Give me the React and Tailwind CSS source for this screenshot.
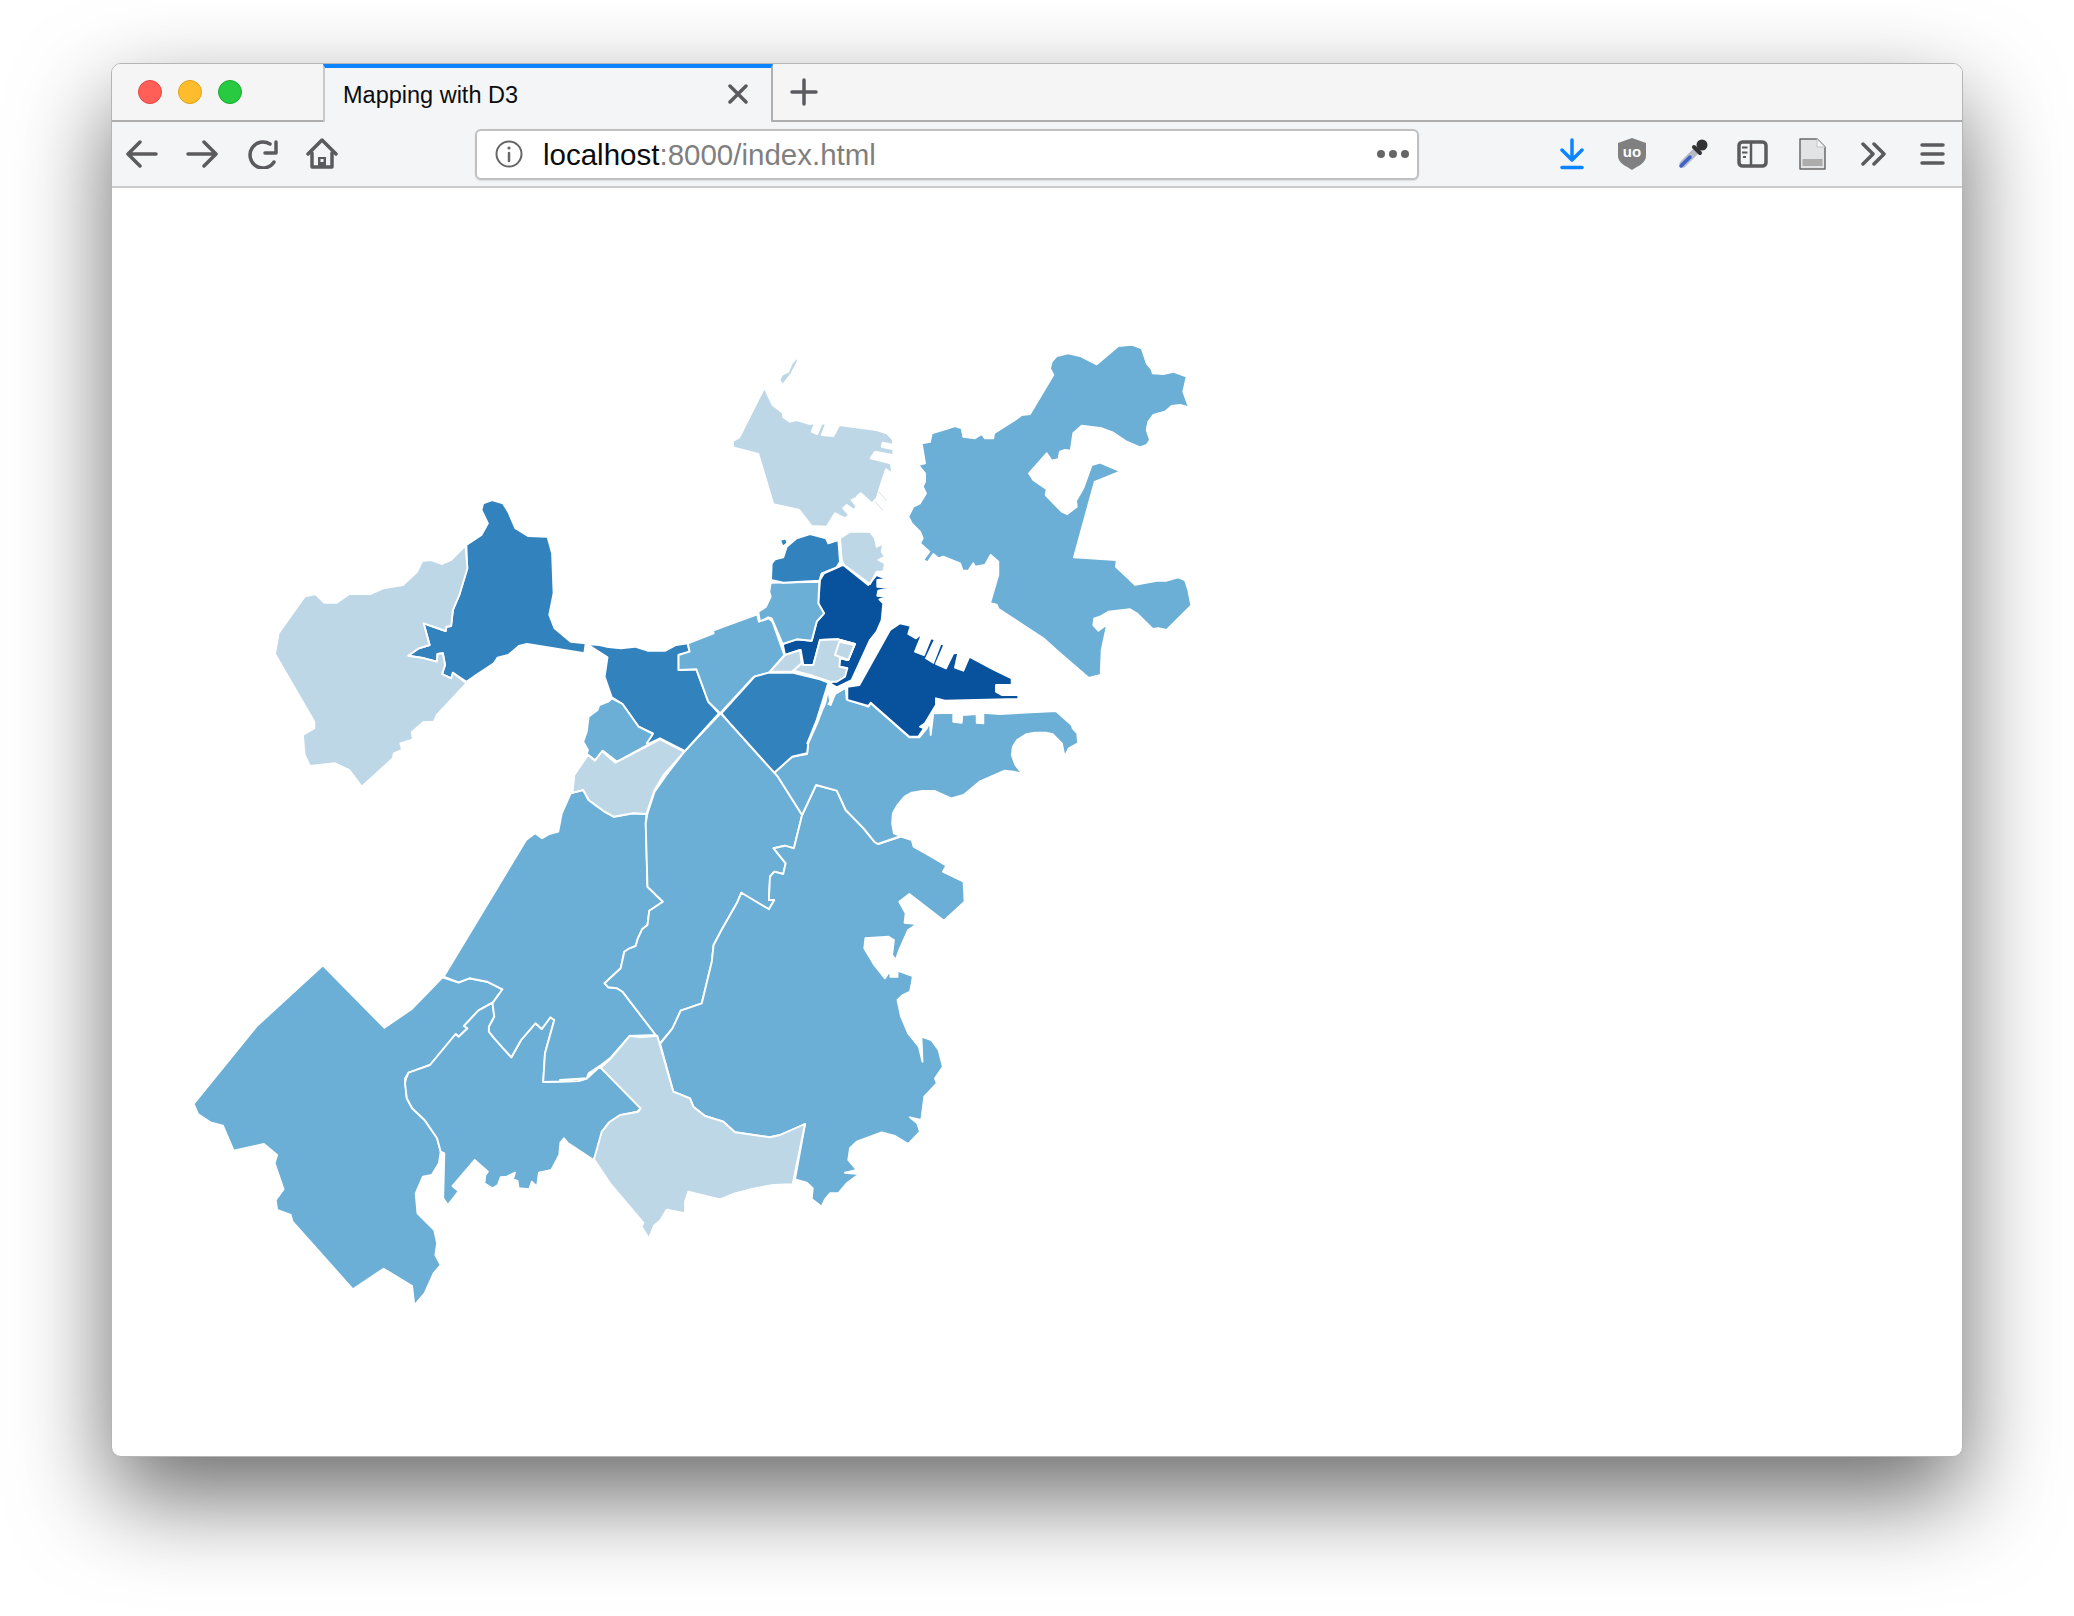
const LIGHT = '#bdd7e7';
const MID = '#6baed6';
const DARK = '#3182bd';
const DARKEST = '#08519c';

// traced from crops of the map, each crop has its own origin and x scale
const crop = (ox, oy, sx) => (s) =>
  s.trim().split(/\s+/).map((p) => {
    const [x, y] = p.split(',').map(Number);
    return `${(ox + x / sx).toFixed(1)},${(oy + y / 3).toFixed(1)}`;
  }).join(' ');
const c3 = crop(700, 330, 3);
const c4 = crop(260, 480, 2.8);
const c5 = crop(560, 700, 2.8);
const c6 = crop(180, 950, 2.8);
const c7 = crop(580, 1000, 3);

const REGIONS = [
  // west roxbury
  [MID, c6('400,46 572,233 648,178 735,82 780,98 810,85 860,95 903,118 875,158 835,182 795,228 805,235 780,260 772,252 700,345 640,368 630,385 635,445 650,475 685,510 720,565 730,605 725,640 705,675 680,680 660,730 665,790 712,840 720,880 715,915 730,945 710,970 685,1030 656,1066 650,1008 570,956 484,1018 315,815 310,795 272,780 268,750 290,718 265,640 272,615 235,582 150,602 120,527 85,517 50,492 38,462 215,228')],
  // hyde park
  [MID, c6('633,385 640,368 700,345 772,252 780,260 805,235 795,228 835,182 875,158 880,200 865,230 865,245 880,265 905,295 928,322 955,270 995,220 1013,237 1037,202 1048,210 1022,310 1017,396 1115,393 1140,385 1175,350 1290,475 1280,485 1230,497 1200,518 1182,545 1175,590 1158,630 1085,578 1075,565 1065,578 1062,615 1040,660 1005,668 1000,710 985,695 978,718 948,715 945,693 932,688 938,668 915,680 898,682 890,705 875,715 860,705 852,700 855,675 862,665 825,630 763,708 780,724 750,765 737,745 740,610 730,605 720,565 685,510 650,475 635,445 630,400')],
  // jamaica plain
  [MID, [
    c4('870,940 905,930 920,960 965,995 990,1010 1045,1000 1082,1002'),
    c5('240,370 245,560 288,605 250,632 245,675 230,688 218,715 212,738 195,745 180,755 170,805 125,850 135,862 160,865 175,875 268,1005 195,1008 140,1075 115,1095 80,1120 75,1135 0,1140'),
    c6('1140,385 1115,393 1017,396 1022,310 1048,210 1037,202 1013,237 995,220 955,270 928,322 905,295 880,265 865,245 865,230 880,200 875,160 903,118 860,95 810,85 780,97 738,80'),
    c4('745,1080 770,1060 790,1075 810,1062 835,1055 845,1000'),
  ].join(' ')],
  // roxbury
  [MID, c5('450,40 480,75 600,218 610,230 678,345 655,445 630,437 598,445 632,490 625,522 600,515 588,530 585,600 600,600 585,628 535,598 508,578 495,610 455,685 430,735 425,785 397,910 338,932 315,985 278,1032 268,1005 175,875 160,865 135,862 125,850 170,805 180,755 195,745 212,738 218,715 230,688 245,675 250,632 288,605 245,560 240,370 245,340 265,275 300,222 348,155')],
  // dorchester
  [MID, [
    c5('280,1032 315,985 338,932 397,910 425,785 430,735 455,685 495,610 508,578 585,628 600,600 585,600 588,530 600,515 625,522 632,490 598,445 630,437 655,445 678,345 717,255 775,272 800,330 850,385 880,425 890,432 955,410 985,420 990,440 1040,470 1082,497 1072,515 1130,545 1133,605 1075,662 978,582 950,605 968,640 965,668 1000,672 975,690 950,750 940,780 930,765 935,720 920,710 855,715 852,745 880,795 910,835 925,810 925,830 945,830 945,812 988,828 985,850 980,875 960,885 945,900 955,950 975,1000 1005,1040 1015,1085 1012,1010 1040,1020 1060,1050 1072,1100 1050,1135 1055,1150 1020,1190 1012,1258'),
    c7('1022,360 990,352 1012,370 1020,395 985,432 945,408 905,397 830,425 810,445 805,480 830,510 795,518 838,522 800,550 775,580 750,580 735,598 725,620 695,597 698,565 680,548 645,538 675,372 600,405 570,412 465,397 430,365 375,348 340,320 330,295 280,275 240,130'),
  ].join(' ')],
  // mattapan
  [LIGHT, c7('62,203 90,178 150,107 180,112 232,107 280,275 330,295 340,320 375,348 430,365 465,397 570,412 600,405 675,372 638,553 580,555 520,566 465,580 420,598 325,575 315,605 315,640 260,629 240,662 222,677 207,716 185,680 190,668 90,550 42,478 65,395 90,365 120,345 175,335 182,325')],
  // south boston
  [MID, [
    c3('392,1125 405,1092 437,1072 440,1108 505,1130 512,1120 628,1222 658,1222 680,1195 690,1175 692,1215 700,1150 760,1148 760,1175 785,1178 787,1155 830,1152 830,1178 850,1180 850,1148 900,1152 1068,1143 1115,1185 1118,1195 1132,1210 1135,1245'),
    c5('1450,130 1425,145 1413,170 1405,130 1380,103 1360,98 1330,98 1305,103 1280,120 1268,140 1265,165 1275,195 1295,222 1270,215 1245,212 1210,228 1175,245 1130,285 1095,295 1050,273 1015,273 985,278 965,290 945,315 932,340 930,370 935,400 955,408 890,432 880,425 850,385 800,330 775,272 717,255 678,345 610,230 600,218 650,170 692,162 695,130 720,70 745,0'),
    c3('372,1130 385,1080'),
  ].join(' ')],
  // seaport
  [DARKEST, c3('570,900 600,880 632,887 625,912 648,925 668,908 645,965 672,975 692,925 705,928 678,985 700,998 722,940 733,945 708,1002 738,1015 760,970 775,968 765,1013 790,1022 808,980 880,1018 935,1045 935,1065 888,1065 888,1085 905,1095 955,1095 955,1107 735,1112 708,1105 708,1125 675,1180 660,1190 672,1195 655,1220 628,1220 512,1118 505,1128 442,1110 442,1070 478,1065')],
  // downtown
  [DARKEST, c3('360,750 372,730 430,705 505,765 530,735 562,748 532,750 532,770 577,773 535,782 532,797 565,800 538,808 550,820 545,870 530,905 510,930 455,1050 410,1072 390,1060 420,1040 442,1015 418,1010 420,985 445,990 465,942 415,928 360,930 340,1005 310,1005 302,960 255,975 248,942 290,928 335,932 350,875 372,850 355,820')],
  // chinatown, bay village and friends
  [LIGHT, c3('360,930 415,928 465,942 445,990 420,985 418,1010 442,1015 435,1040 410,1055 390,1055 330,1035 280,1022 305,1000 310,1005 340,1005')],
  [LIGHT, c3('418,935 463,945 445,990 405,975')],
  [LIGHT, c3('210,1025 255,975 300,960 305,1000 275,1025')],
  // beacon hill
  [MID, c3('212,758 358,755 355,820 372,850 350,875 335,932 290,928 248,942 215,865 205,862 180,875 175,845 198,830 212,800 208,785')],
  // west end
  [DARK, c3('213,750 215,700 225,688 250,682 260,650 290,625 330,612 378,625 385,640 415,630 420,695 410,712 365,730 358,752 250,758')],
  [DARK, c3('240,630 258,625 262,640 248,650')],
  [DARK, c3('258,605 278,605 270,613')],
  // north end
  [LIGHT, c3('420,625 450,605 510,605 525,625 530,650 550,640 545,665 555,680 535,690 555,700 550,725 530,725 510,762 432,705 425,690')],
  // charlestown
  [LIGHT, c3('193,173 218,225 248,248 250,262 270,275 290,270 330,282 345,280 335,305 352,312 365,280 378,282 365,315 400,318 418,285 530,300 560,310 578,328 580,345 548,338 545,350 580,358 580,376 525,365 512,385 572,400 578,432 558,418 542,465 530,505 515,520 482,490 470,500 480,515 465,505 455,510 470,530 462,540 440,525 430,535 448,555 435,565 405,550 380,590 335,588 298,540 220,523 175,372 100,352 98,333 118,322')],
  [LIGHT, c3('295,78 293,95 275,130 248,165 238,150 245,135 265,125 275,100')],
  // east boston
  [MID, c3('1060,135 1050,115 1055,95 1070,78 1105,70 1140,78 1190,103 1255,48 1295,44 1325,55 1340,100 1355,118 1358,130 1390,132 1420,125 1460,140 1450,185 1467,232 1440,225 1415,228 1395,245 1360,255 1345,275 1340,300 1350,330 1340,345 1320,352 1280,335 1240,308 1205,295 1145,287 1120,310 1112,362 1095,360 1080,365 1075,388 1055,392 1040,370 987,430 1000,450 1040,478 1037,495 1085,545 1102,552 1130,530 1128,512 1150,475 1175,405 1200,398 1262,424 1184,456 1122,682 1250,690 1248,710 1285,745 1305,764 1370,752 1400,752 1435,742 1455,750 1465,780 1474,826 1400,900 1375,895 1358,897 1310,850 1290,838 1225,845 1200,860 1183,865 1180,885 1195,902 1205,895 1222,882 1205,960 1202,1035 1166,1044 1075,965 1030,925 895,836 890,824 870,820 895,735 895,695 872,675 855,705 825,710 820,700 805,722 788,722 780,700 730,680 715,685 700,672 683,697 670,690 688,665 660,640 668,625 660,605 635,580 625,560 640,530 660,520 678,490 668,470 675,455 675,430 655,405 675,400 665,340 690,335 695,310 745,295 765,288 785,295 790,320 825,325 845,312 855,325 880,325 882,310 945,270 965,255 990,252')],
  // allston brighton stub
  [DARK, c4('578,195 620,165 638,130 620,90 625,70 650,60 680,70 695,95 715,145 750,168 805,170 818,220 822,340 810,405 825,445 870,485 912,490 908,520 748,492 725,498 695,525 665,533 655,550 605,585 578,605 540,578 535,595 510,582 518,555 512,520 497,522 495,545 460,535 415,527 445,505 475,495 458,430 520,453 522,440 535,438 540,390 558,345 580,265')],
  // brookline side
  [LIGHT, c4('575,197 581,265 558,345 540,390 535,438 522,440 520,453 458,430 475,495 445,505 415,527 460,535 495,545 497,522 512,520 518,555 510,582 535,595 540,578 578,610 495,705 487,725 457,727 425,757 428,778 393,790 398,810 375,820 372,835 285,920 250,870 210,850 140,858 125,825 120,765 152,745 152,725 42,522 52,460 125,350 155,342 180,368 215,368 250,342 310,342 345,325 400,315 440,275 455,242 480,240 510,252 535,240')],
  // fenway
  [DARK, c4('915,492 950,495 970,500 1010,505 1050,500 1085,512 1135,512 1165,495 1197,490 1203,515 1172,525 1172,570 1222,568 1255,665 1285,700 1190,813 1120,775 1080,795 1100,760 1060,740 1015,672 985,652 965,590 973,532')],
  [MID, c4('985,655 1015,672 1060,740 1100,762 1083,790 1085,795 1000,845 960,812 938,840 915,822 918,810 905,785 915,755 920,710 945,690 950,675 975,665')],
  // mission hill
  [LIGHT, c4('918,825 938,842 958,814 995,848 1120,778 1188,815 1130,885 1105,930 1082,1002 1045,1000 990,1010 965,995 920,960 905,930 875,938 880,885')],
  // back bay
  [MID, c4('1198,490 1270,460 1268,452 1392,403 1397,425 1425,415 1435,425 1468,525 1425,578 1383,590 1288,700 1255,665 1222,568 1172,570 1172,525 1203,515')],
  // south end
  [DARK, [
    c4('1385,590 1425,578 1490,578 1568,598'),
    c3('385,1058 350,1170 322,1240'),
    c5('695,130 692,160 650,170 600,218 480,75 452,40'),
  ].join(' ')],
];

function Dot({ className }) {
  return <div className={`w-[24px] h-[24px] rounded-full border ${className}`} />;
}

function Stroke({ w, h, className, children }) {
  return (
    <svg width={w} height={h} viewBox={`0 0 ${w} ${h}`} fill="none" stroke="#5b5b5f" strokeWidth="3.5" strokeLinecap="round" strokeLinejoin="round" className={`shrink-0 ${className}`}>
      {children}
    </svg>
  );
}

function TabStrip() {
  return (
    <div className="h-[58px] shrink-0 flex bg-[#f5f5f6] border-b-2 border-[#adadad]">
      <div className="w-[211px] shrink-0 flex items-center gap-[16px] pl-[26px]">
        <Dot className="bg-[#ff5f57] border-[#e2463f]" />
        <Dot className="bg-[#ffbd2e] border-[#e1a116]" />
        <Dot className="bg-[#28ca41] border-[#14ae2a]" />
      </div>
      <div className="w-[450px] h-[58px] shrink-0 flex items-center justify-between pl-[18px] pr-[23px] bg-[#f4f5f7] border-t-4 border-x-2 border-t-[#0a84ff] border-x-[#b0b0b0] border-l-[#c8c8c8]">
        <span className="text-[23.5px] text-[#0c0c0d] font-['Liberation_Sans',sans-serif] mt-[1px]">Mapping with D3</span>
        <Stroke w={20} h={20} className="mt-[-2px]">
          <path d="M2 2 L18 18 M18 2 L2 18" />
        </Stroke>
      </div>
      <Stroke w={28} h={28} className="ml-[17px] mt-[14px]">
        <path d="M14 2 V26 M2 14 H26" />
      </Stroke>
    </div>
  );
}

function Toolbar() {
  return (
    <div className="h-[66px] shrink-0 flex items-center bg-[#f4f5f7] border-b-2 border-[#cbcbcb]">
      <Stroke w={32} h={28} className="ml-[14px]"><path d="M30 14 H3 M14 2 L2 14 L14 26" /></Stroke>
      <Stroke w={32} h={28} className="ml-[28px]"><path d="M2 14 H29 M18 2 L30 14 L18 26" /></Stroke>
      <Stroke w={30} h={30} className="ml-[30px]">
        <path d="M26 23 A13 13 0 1 1 22 5" />
        <path d="M28 3 V14 H17" />
      </Stroke>
      <svg width="32" height="32" viewBox="0 0 32 32" fill="none" stroke="#5b5b5f" strokeWidth="3.5" strokeLinecap="round" strokeLinejoin="round" className="shrink-0 ml-[28px]">
        <path d="M2 16 L16 2 L30 16" />
        <path d="M6 15 V29 H26 V15" />
        <path d="M12 29 V19 H20 V29 Z" fill="#5b5b5f" stroke="none" />
        <rect x="14.5" y="21" width="3" height="3" fill="#f4f5f7" stroke="none" />
      </svg>
      <div className="w-[944px] h-[51px] shrink-0 ml-[137px] flex items-center bg-white border-2 border-[#c0c0c0] rounded-[6px] shadow-[0_1px_2px_rgba(0,0,0,0.1)]">
        <svg width="28" height="28" viewBox="0 0 28 28" fill="none" stroke="#666" strokeWidth="2" strokeLinecap="round" className="shrink-0 ml-[18px]">
          <circle cx="14" cy="14" r="12.5" />
          <path d="M14 13 V21" strokeWidth="2.5" />
          <circle cx="14" cy="8" r="1.6" fill="#666" stroke="none" />
        </svg>
        <span className="ml-[20px] mt-[2px] text-[29.5px] text-[#0c0c0d] font-['Liberation_Sans',sans-serif]">
          localhost<span className="text-[#7f7f7f]">:8000/index.html</span>
        </span>
        <div className="ml-auto mr-[8px] flex gap-[4px]">
          <div className="w-[8px] h-[8px] rounded-full bg-[#666]" />
          <div className="w-[8px] h-[8px] rounded-full bg-[#666]" />
          <div className="w-[8px] h-[8px] rounded-full bg-[#666]" />
        </div>
      </div>
      <svg width="24" height="32" viewBox="0 0 24 32" fill="none" stroke="#0a84ff" strokeWidth="3.5" strokeLinecap="round" strokeLinejoin="round" className="shrink-0 ml-[141px]">
        <path d="M12 2 V21 M2 12 L12 22 L22 12" />
        <path d="M2 29.5 H22" />
      </svg>
      <svg width="28" height="32" viewBox="0 0 28 32" className="shrink-0 ml-[34px]">
        <path d="M14 0 L28 5 V18 C28 25 20 28 14 32 C8 28 0 25 0 18 V5 Z" fill="#808080" />
        <text x="14" y="19" textAnchor="middle" fontSize="15" fontWeight="700" fill="#fff" fontFamily="Liberation Sans, sans-serif">uo</text>
      </svg>
      <svg width="31" height="31" viewBox="0 0 31 31" className="shrink-0 ml-[31px]">
        <path d="M6 25 L19 12" stroke="#b6bac6" strokeWidth="7" strokeLinecap="round" />
        <path d="M4 27 L13 18" stroke="#3d63c9" strokeWidth="3.5" strokeLinecap="round" />
        <path d="M17 8 L23 14" stroke="#333" strokeWidth="4" strokeLinecap="round" />
        <circle cx="25" cy="6" r="5.5" fill="#333" />
      </svg>
      <svg width="31" height="28" viewBox="0 0 31 28" fill="none" stroke="#5b5b5f" strokeWidth="3.5" className="shrink-0 ml-[29px]">
        <rect x="2" y="2" width="27" height="24" rx="3.5" />
        <path d="M14 2 V26" strokeWidth="2.5" />
        <path d="M5 7.5 H10.5 M5 12.5 H10.5 M6 17 H9" strokeWidth="2" />
      </svg>
      <svg width="27" height="32" viewBox="0 0 27 32" className="shrink-0 ml-[31px]">
        <path d="M1 1 H18 L26 9 V31 H1 Z" fill="#e2e3e5" stroke="#6a6a6a" strokeWidth="1.5" strokeLinejoin="round" />
        <path d="M18 1 V9 H26" fill="#f4f5f7" stroke="#c4c4c4" strokeWidth="1" />
        <rect x="3.5" y="21" width="20" height="7" fill="#acacac" />
      </svg>
      <Stroke w={27} h={24} className="ml-[34px]">
        <path d="M3 2 L13 12 L3 22 M14 2 L24 12 L14 22" />
      </Stroke>
      <Stroke w={25} h={24} className="ml-[33px]">
        <path d="M2 3 H23 M2 12 H23 M2 21 H23" />
      </Stroke>
    </div>
  );
}

function BostonMap() {
  return (
    <svg width="1850" height="1268" viewBox="112 188 1850 1268" className="block">
      {REGIONS.map(([fill, points], i) => (
        <polygon key={i} points={points} fill={fill} stroke="#fff" strokeWidth="1.9" strokeLinejoin="round" />
      ))}
      <polygon points={c5('955,908 968,920 972,948 960,935')} fill="#fff" />
      <path d={`M${c3('535,485 560,512')} M${c3('525,515 548,540')}`} stroke={LIGHT} strokeWidth="0.7" fill="none" />
      <path d={`M${c3('438,1072 405,1090 385,1125')}`} stroke="#fff" strokeWidth="2.5" fill="none" />
    </svg>
  );
}

export default function App() {
  return (
    <div className="w-[2074px] h-[1616px] overflow-hidden bg-white pt-[63px] pl-[111px]">
      <div className="w-[1852px] h-[1394px] flex flex-col overflow-hidden bg-white rounded-[10px] border border-[#b5b5b5] shadow-[0_40px_95px_rgba(0,0,0,0.58)]">
        <TabStrip />
        <Toolbar />
        <BostonMap />
      </div>
    </div>
  );
}
